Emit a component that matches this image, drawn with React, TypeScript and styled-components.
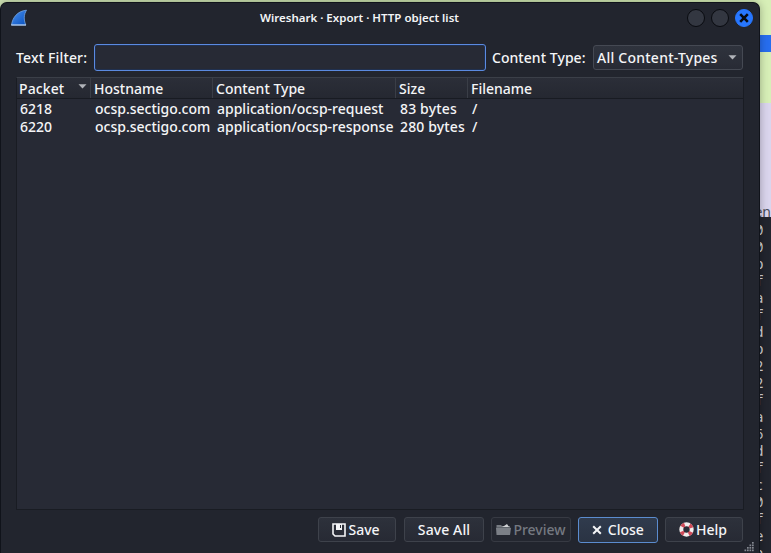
import React from "react";
import styled, { createGlobalStyle } from "styled-components";

const Global = createGlobalStyle`
  * { box-sizing: border-box; }
  body { margin: 0; overflow: hidden; background: #22252e; }
`;

const Desktop = styled.div`
  position: relative;
  width: 771px;
  height: 553px;
  overflow: hidden;
  display: flex;
  justify-content: flex-end;
  background: linear-gradient(90deg, #cfe3b5, #c6ddaa 50%, #d5ecb5);
  font-family: "Noto Sans", sans-serif;
`;

const Behind = styled.div`
  width: 17px;
  height: 553px;
  display: flex;
  flex-direction: column;
`;

const Stripe = styled.div<{ $h: number; $bg: string }>`
  height: ${(p) => p.$h}px;
  flex: none;
  background: ${(p) => p.$bg};
`;

const Details = styled(Stripe)`
  display: flex;
  align-items: flex-end;
  justify-content: flex-end;
  overflow: hidden;
  font-size: 14px;
  line-height: 10px;
  color: #464c58;
`;

const Bytes = styled.div`
  height: 336px;
  flex: none;
  overflow: hidden;
  padding: 4px 0 0 1px;
  background: #22252e;
  color: #d6d9de;
  font: 14px/17px "Noto Sans Mono", "DejaVu Sans Mono", monospace;
`;

const Byte = styled.div`
  height: 17px;
`;

const Dialog = styled.div`
  position: absolute;
  left: 0;
  top: 2px;
  width: 760px;
  height: 552px;
  display: flex;
  flex-direction: column;
  padding: 0 16px 0 15px;
  border: 1px solid #10131a;
  border-bottom: 0;
  border-radius: 7px 7px 0 0;
  background: #22252e;
  color: #f4f5f7;
  box-shadow: 0 0 9px rgba(0, 0, 0, 0.3);
`;

const TitleBar = styled.header`
  height: 30px;
  flex: none;
  display: grid;
  grid-template-columns: 26px 1fr 66px;
  align-items: center;
  margin: 0 -10px 0 -6px;
`;

const Title = styled.h1`
  margin: 0;
  padding-right: 4px;
  text-align: center;
  font-size: 11.5px;
  line-height: 18px;
  font-weight: 600;
`;

const WindowButtons = styled.div`
  display: flex;
  gap: 6px;
`;

const WindowButton = styled.button<{ $close?: boolean }>`
  display: flex;
  align-items: center;
  justify-content: center;
  width: 18px;
  height: 18px;
  padding: 0;
  border-radius: 50%;
  border: 1px solid ${(p) => (p.$close ? "#2777ff" : "#090b10")};
  background: ${(p) => (p.$close ? "#2777ff" : "#333741")};
`;

const Text = styled.span<{ $track?: number }>`
  font-size: 14px;
  line-height: 18px;
  font-weight: 500;
  letter-spacing: ${(p) => p.$track ?? 0}px;
  white-space: pre;
`;

const Filters = styled.div`
  height: 27px;
  flex: none;
  margin-top: 11px;
  display: grid;
  grid-template-columns: 78px 392px 107px 150px;
  align-items: center;
`;

const FilterInput = styled.input`
  width: 392px;
  height: 27px;
  border: 1px solid #5b8ae0;
  border-radius: 3px;
  background: #272a35;
  box-shadow: inset 0 0 0 1px #20304f;
  outline: none;
`;

const FilterLabel = styled(Text)<{ $indent?: number }>`
  padding-left: ${(p) => p.$indent ?? 0}px;
`;

const Combo = styled.button`
  display: flex;
  align-items: center;
  justify-content: space-between;
  height: 25px;
  padding: 0 5px 0 3px;
  border: 1px solid #454953;
  border-radius: 3px;
  background: linear-gradient(#2f333d, #282b35);
  color: inherit;
  font-family: inherit;
`;

const Table = styled.div`
  width: 728px;
  height: 433px;
  flex: none;
  margin-top: 6px;
  border: 1px solid #191c23;
  border-top-color: #3b3f48;
  background: #272a35;
`;

const Row = styled.div`
  display: grid;
  grid-template-columns: 74px 122px 183px 72px 1fr;
  height: 18px;
`;

const HeaderRow = styled(Row)`
  height: 21px;
  margin-bottom: 1px;
  border-bottom: 1px solid #181b22;
  background: linear-gradient(#2b2e38, #252831);
`;

const HeadCell = styled.div`
  display: flex;
  justify-content: space-between;
  align-items: flex-start;
  padding: 2px 3px 0 2px;
  border-right: 1px solid #3a3e47;
  &:not(:first-child) { padding-left: 3px; }
  &:last-child { border-right: 0; }
`;

const SortMark = styled.svg`
  margin-top: 4px;
`;

const Cell = styled.div`
  padding-left: 4px;
  overflow: hidden;
  display: flex;
  &:first-child { padding-left: 3px; }
`;

const Actions = styled.footer`
  display: flex;
  gap: 7px;
  margin-top: 6px;
  justify-content: flex-end;
  align-items: center;
  height: 27px;
  flex: none;
`;

const Action = styled.button<{ $w: number; $focus?: boolean; $off?: boolean }>`
  display: flex;
  align-items: center;
  justify-content: center;
  gap: 2px;
  width: ${(p) => p.$w}px;
  height: ${(p) => (p.$focus ? 26 : 25)}px;
  flex: none;
  padding: 0;
  border: 1px solid ${(p) => (p.$focus ? "#5b8ccf" : p.$off ? "#373a43" : "#3e424b")};
  border-radius: 3px;
  background: ${(p) =>
    p.$focus ? "linear-gradient(#303b4d, #2a3343)" : p.$off ? "#242730" : "linear-gradient(#2d313b, #272a34)"};
  color: ${(p) => (p.$off ? "#757981" : "inherit")};
  font-family: inherit;
  &:first-child { margin-right: 1px; padding-right: 2px; }
  &:last-child { padding-right: 2px; }
`;

const Grip = styled.svg`
  position: absolute;
  right: 4px;
  bottom: 1px;
`;

const Fin = () => (
  <svg width="18" height="18" viewBox="0 0 18 18">
    <defs>
      <linearGradient id="fin" x2="1" y2="1">
        <stop offset="0" stopColor="#4c91ef" />
        <stop offset="1" stopColor="#0750bd" />
      </linearGradient>
    </defs>
    <path d="M1.5 16C2.5 8.5 7.5 2 16.5 1.2C13.8 5.5 13.5 10.5 15.8 16Z" fill="url(#fin)" stroke="#75a7e6" strokeWidth=".8" />
    <path d="M1.2 16H16" stroke="#bed4f2" strokeWidth="1.1" />
  </svg>
);

const Cross = ({ size, color, w }: { size: number; color: string; w: number }) => (
  <svg width={size} height={size} viewBox="0 0 10 10">
    <path d="M1.2 1.2L8.8 8.8M8.8 1.2L1.2 8.8" stroke={color} strokeWidth={w} />
  </svg>
);

const Arrow = () => (
  <svg width="9" height="5" viewBox="0 0 9 5">
    <path d="M.5 .3H8.5L4.5 4.6Z" fill="#b0b3b9" />
  </svg>
);

const Floppy = () => (
  <svg width="14" height="14" viewBox="0 0 14 14">
    <path d="M1 1H13V13H3L1 11Z" fill="none" stroke="#f4f5f7" strokeWidth="1.6" />
    <path d="M4 1H10V7H4ZM8 2V5H9V2Z" fill="#f4f5f7" fillRule="evenodd" />
  </svg>
);

const Folder = () => (
  <svg width="15" height="13" viewBox="0 0 15 13">
    <path d="M.5 2H5L6 3H14V12H.5Z" fill="#777b82" />
    <path d="M8 3L11 1L13 4H6Z" fill="#d0d2d5" />
    <path d="M0 5H15L14 12H1Z" fill="#7b7f86" />
    <path d="M.5 4.5H14.5" stroke="#555a62" strokeWidth=".7" />
  </svg>
);

const Lifebuoy = () => (
  <svg width="15" height="15" viewBox="0 0 15 15">
    <circle cx="7.5" cy="7.5" r="5.2" fill="none" stroke="#f2eeee" strokeWidth="4" />
    <circle
      cx="7.5"
      cy="7.5"
      r="5.2"
      fill="none"
      stroke="#cf4a58"
      strokeWidth="4"
      strokeDasharray="3.2 4.968"
      strokeDashoffset="-2.48"
    />
  </svg>
);

const columns: [string, number][] = [["Packet", 0.1], ["Hostname", 0], ["Content Type", 0], ["Size", 0], ["Filename", 0]];
const tracking = [0, 0, 0, 0.15, 0];
const objects = [
  ["6218", "ocsp.sectigo.com", "application/ocsp-request", "83 bytes", "/"],
  ["6220", "ocsp.sectigo.com", "application/ocsp-response", "280 bytes", "/"],
];
const bytes = "00bfafdb22fa6dfc0fea".split("");
const gripDots = [[8, 0], [5.5, 2.5], [8, 2.5], [3, 5], [5.5, 5], [8, 5], [0.5, 7.5], [3, 7.5], [5.5, 7.5], [8, 7.5]];

export default function App() {
  return (
    <Desktop>
      <Global />
      <Behind>
        <Stripe $h={35} $bg="#d7efb7" />
        <Stripe $h={17} $bg="#276eef" />
        <Stripe $h={51} $bg="#d7efb7" />
        <Details $h={114} $bg="#dad5ed">en</Details>
        <Bytes>{bytes.map((b, i) => <Byte key={i}>{b}</Byte>)}</Bytes>
      </Behind>
      <Dialog>
        <TitleBar>
          <Fin />
          <Title>Wireshark · Export · HTTP object list</Title>
          <WindowButtons>
            <WindowButton aria-label="Minimize" />
            <WindowButton aria-label="Maximize" />
            <WindowButton $close aria-label="Close window"><Cross size={10} color="#080b12" w={2.6} /></WindowButton>
          </WindowButtons>
        </TitleBar>
        <Filters>
          <FilterLabel $track={0.15}>Text Filter:</FilterLabel>
          <FilterInput aria-label="Text Filter" />
          <FilterLabel $indent={6} $track={0.05}>Content Type:</FilterLabel>
          <Combo><Text $track={0.24}>All Content-Types</Text><Arrow /></Combo>
        </Filters>
        <Table>
          <HeaderRow>
            {columns.map(([c, t], i) => (
              <HeadCell key={c}>
                <Text $track={t}>{c}</Text>
                {i === 0 && <SortMark width="9" height="5" viewBox="0 0 9 5"><path d="M.5 .3H8.5L4.5 4.6Z" fill="#b0b3b9" /></SortMark>}
              </HeadCell>
            ))}
          </HeaderRow>
          {objects.map((o) => (
            <Row key={o[0]}>{o.map((v, i) => <Cell key={i}><Text $track={tracking[i]}>{v}</Text></Cell>)}</Row>
          ))}
        </Table>
        <Actions>
          <Action $w={78}><Floppy /><Text>Save</Text></Action>
          <Action $w={80}><Text $track={0.1}>Save All</Text></Action>
          <Action $w={80} $off><Folder /><Text $track={0}>Preview</Text></Action>
          <Action $w={80} $focus><Cross size={10} color="#f4f5f7" w={2} /><Text>{" Close"}</Text></Action>
          <Action $w={78}><Lifebuoy /><Text>Help</Text></Action>
        </Actions>
        <Grip width="11" height="11" viewBox="0 0 11 11">
          {gripDots.map(([x, y]) => <rect key={`${x}-${y}`} x={x} y={y} width="1.7" height="1.7" fill="#858992" />)}
        </Grip>
      </Dialog>
    </Desktop>
  );
}
